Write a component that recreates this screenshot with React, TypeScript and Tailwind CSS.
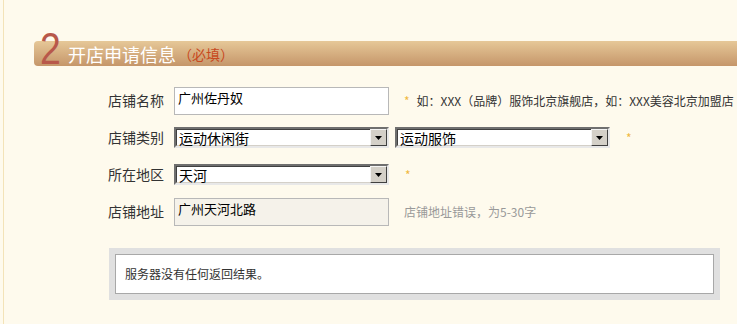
import React from "react";

const cjk = { fontFamily: '"Noto Sans CJK SC", "Liberation Sans", sans-serif' };

function Select({ value, width }: { value: string; width: number }) {
  return (
    <div
      className="flex h-[21px] items-stretch border-2 border-t-[#6f6f6f] border-l-[#6f6f6f] border-r-[#e8e8e8] border-b-[#e8e8e8] bg-white"
      style={{ width }}
    >
      <div className="flex flex-1 items-center border border-[#404040] border-r-0 border-b-[#d4d0c8] pl-[2px] text-[14px] leading-none text-black">
        {value}
      </div>
      <div className="flex w-[17px] items-center justify-center border border-t-[#f4f4f4] border-l-[#f4f4f4] border-r-[#404040] border-b-[#404040] bg-[#d4d0c8]">
        <svg width="7" height="4" viewBox="0 0 7 4">
          <path d="M0 0h7L3.5 4z" fill="#000" />
        </svg>
      </div>
    </div>
  );
}

function Row({ label, children }: { label: string; children: React.ReactNode }) {
  return (
    <div className="flex h-[37px] items-center">
      <div className="w-[64px] text-right text-[14px] text-[#333]">{label}</div>
      <div className="ml-[10px] flex items-center">{children}</div>
    </div>
  );
}

const Star = ({ ml }: { ml: number }) => (
  <span className="text-[12px] text-[#f0b840]" style={{ marginLeft: ml }}>
    *
  </span>
);

export default function App() {
  return (
    <div className="h-[324px] w-[737px] overflow-hidden bg-[#fefaed]" style={cjk}>
      <div className="ml-[3px] h-full border-l border-[#f3e3b8] pt-[41px]">
        {/* section header */}
        <div className="ml-[30px] flex h-[25px] items-end rounded-l-[4px] bg-gradient-to-b from-[#e6c898] to-[#c5966a]">
          <span
            className="ml-[6px] inline-block w-[24px] origin-bottom-left scale-x-[0.85] text-[44px] leading-[34px] text-[#b8584a]"
            style={{ fontFamily: '"Liberation Sans", sans-serif', fontWeight: 300 }}
          >
            2
          </span>
          <span className="ml-[4px] self-center text-[18px] leading-none text-white">开店申请信息</span>
          <span className="ml-[2px] self-center text-[14px] leading-none text-[#c8491e]">（必填）</span>
        </div>

        <div className="mt-[16px] pl-[96px]">
          <Row label="店铺名称">
            <div className="flex h-[28px] w-[215px] items-start border border-[#b8b8b8] bg-white px-[3px] pt-[3px] text-[13px] leading-none text-black">
              广州佐丹奴
            </div>
            <Star ml={15} />
            <span className="ml-[7px] whitespace-nowrap text-[12px] text-[#333]">
              如：XXX（品牌）服饰北京旗舰店，如：XXX美容北京加盟店
            </span>
          </Row>
          <Row label="店铺类别">
            <Select value="运动休闲街" width={215} />
            <div className="ml-[6px]">
              <Select value="运动服饰" width={215} />
            </div>
            <Star ml={16} />
          </Row>
          <Row label="所在地区">
            <Select value="天河" width={215} />
            <Star ml={16} />
          </Row>
          <Row label="店铺地址">
            <div className="flex h-[28px] w-[215px] items-start border border-[#b8b8b8] bg-[#f5f2ea] px-[3px] pt-[3px] text-[13px] leading-none text-black">
              广州天河北路
            </div>
            <span className="ml-[15px] text-[12px] text-[#999]">店铺地址错误，为5-30字</span>
          </Row>

          <div className="ml-[9px] mt-[18px] w-[611px] bg-[#e0e0e0] p-[6px]">
            <div className="flex h-[40px] items-center border border-[#a8a8a8] bg-white pl-[9px] text-[12px] text-[#333]">
              服务器没有任何返回结果。
            </div>
          </div>
        </div>
      </div>
    </div>
  );
}
